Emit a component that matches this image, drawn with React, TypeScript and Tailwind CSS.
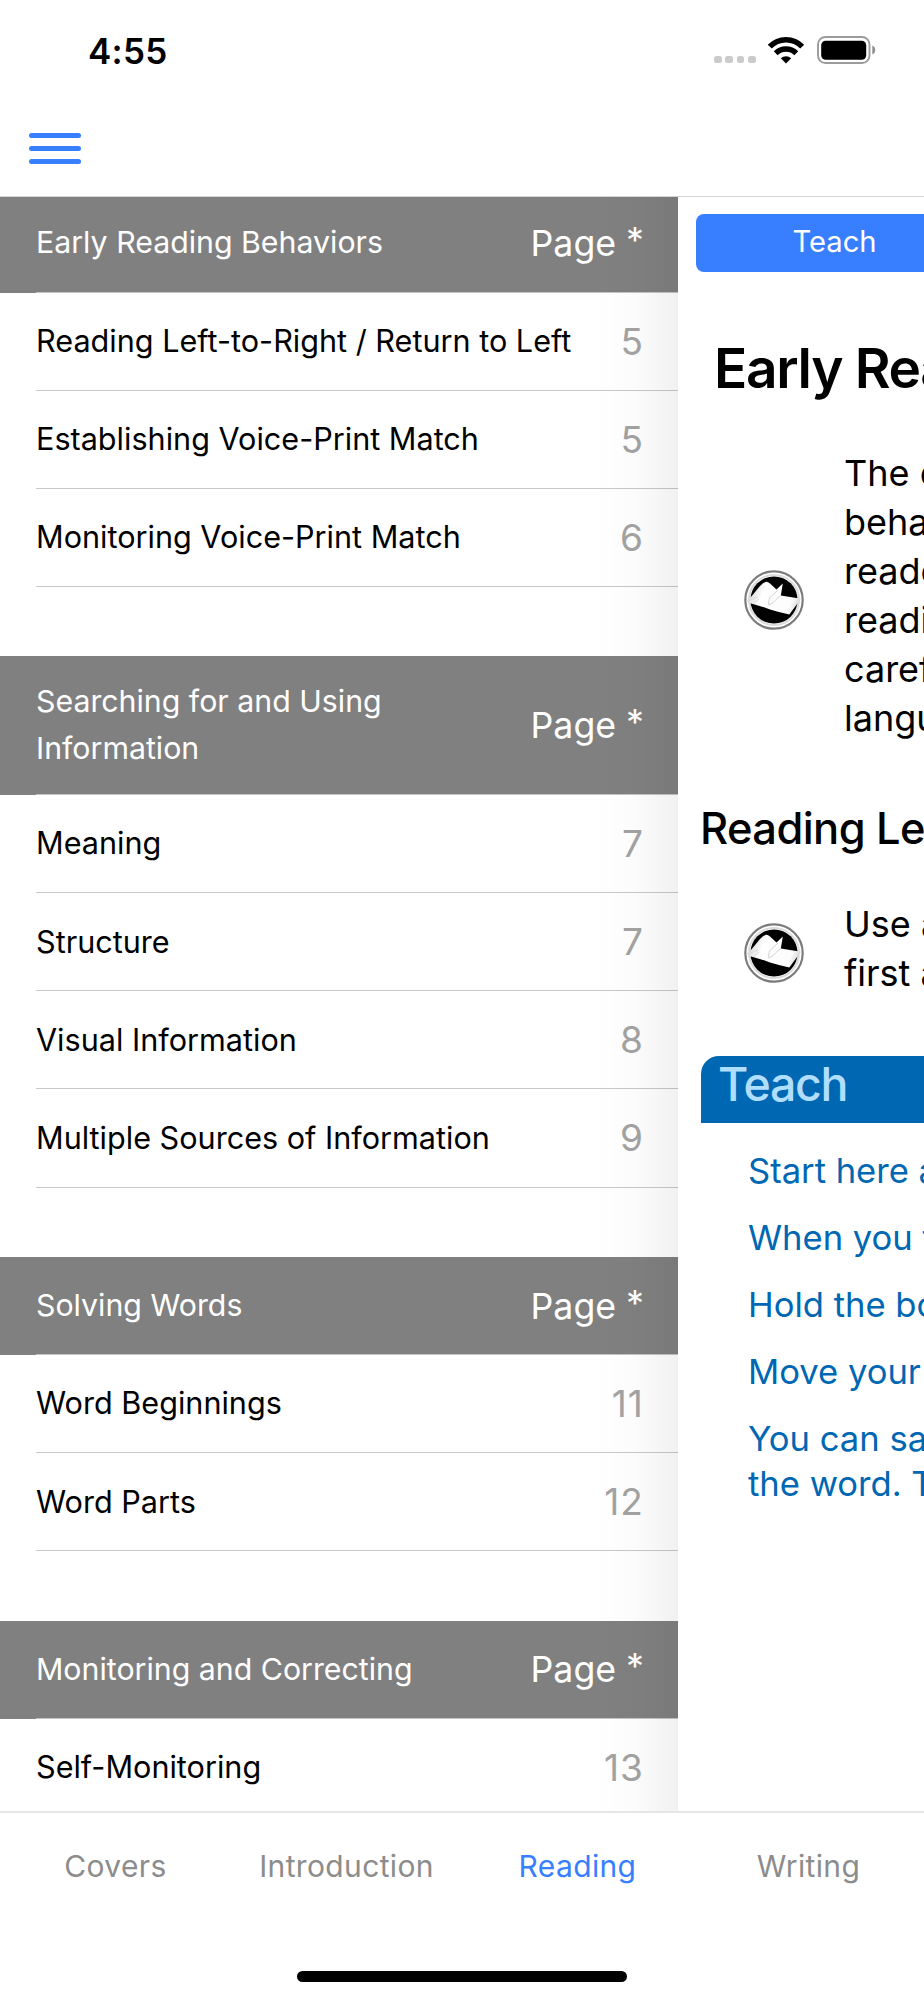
interface Topic {
  title: string;
  page: number;
}

interface Section {
  title: string;
  topics: Topic[];
}

const SECTIONS: Section[] = [
  {
    title: "Early Reading Behaviors",
    topics: [
      { title: "Reading Left-to-Right / Return to Left", page: 5 },
      { title: "Establishing Voice-Print Match", page: 5 },
      { title: "Monitoring Voice-Print Match", page: 6 },
    ],
  },
  {
    title: "Searching for and Using Information",
    topics: [
      { title: "Meaning", page: 7 },
      { title: "Structure", page: 7 },
      { title: "Visual Information", page: 8 },
      { title: "Multiple Sources of Information", page: 9 },
    ],
  },
  {
    title: "Solving Words",
    topics: [
      { title: "Word Beginnings", page: 11 },
      { title: "Word Parts", page: 12 },
    ],
  },
  {
    title: "Monitoring and Correcting",
    topics: [{ title: "Self-Monitoring", page: 13 }],
  },
];

const TABS = ["Covers", "Introduction", "Reading", "Writing"];
const ACTIVE_TAB = "Reading";

const INTRO_LINES = ["The e", "beha", "reade", "readi", "caref", "langu"];
const USE_LINES = ["Use a", "first a"];
const PROMPTS = [
  ["Start here a"],
  ["When you f"],
  ["Hold the bo"],
  ["Move your"],
  ["You can sav", "the word. T"],
];

export default function App() {
  return (
    <div className="w-[924px] h-[2000px] overflow-hidden bg-white text-black font-['Inter',sans-serif] flex flex-col">
      <StatusBar />
      <header className="h-[97px] shrink-0 border-b border-[#d4d4d4] pl-[29px] pt-[33px]">
        <button aria-label="Menu" className="flex flex-col gap-2">
          <span className="block w-[52px] h-[5px] rounded-full bg-[#387fff]" />
          <span className="block w-[52px] h-[5px] rounded-full bg-[#387fff]" />
          <span className="block w-[52px] h-[5px] rounded-full bg-[#387fff]" />
        </button>
      </header>
      <main className="h-[1614px] shrink-0 flex overflow-hidden">
        <Sidebar />
        <Content />
      </main>
      <TabBar />
    </div>
  );
}

function StatusBar() {
  return (
    <div className="h-[100px] shrink-0 flex items-start justify-between pl-[88px] pr-[48px]">
      <p className="mt-[29px] text-[35px] leading-[44px] font-semibold tracking-[0.008em]">4:55</p>
      <div className="mt-9 h-7 flex items-center">
        <div className="flex gap-[3.5px] mt-[19px]">
          {[0, 1, 2, 3].map((i) => (
            <span key={i} className="block w-[7.7px] h-[7.5px] rounded-[2.5px] bg-[#cbcbcb]" />
          ))}
        </div>
        <svg className="ml-[12.5px]" width="37" height="27" viewBox="0 0 37 27" fill="none" stroke="#000">
          <path d="M1.8 9.7 A 22.5 22.5 0 0 1 34.2 9.7" strokeWidth="5.5" />
          <path d="M7.7 16.2 A 14.7 14.7 0 0 1 28.3 16.2" strokeWidth="5.4" />
          <path d="M18 26.5 L12.8 21.2 A 7.8 7.8 0 0 1 23.2 21.2 Z" fill="#000" stroke="none" />
        </svg>
        <svg className="ml-3" width="59" height="28" viewBox="0 0 59 28">
          <rect x="1" y="1" width="51.5" height="26" rx="7.5" fill="none" stroke="#9b9b9b" strokeWidth="1.9" />
          <rect x="4.2" y="4.8" width="45" height="19" rx="4.5" fill="#000" />
          <path d="M55.3 9.5 C59.2 11 59.2 17 55.3 18.5 Z" fill="#8e8e8e" />
        </svg>
      </div>
    </div>
  );
}

function Sidebar() {
  return (
    <aside className="relative w-[678px] shrink-0 overflow-hidden">
      <div className="-mt-[2.6px] flex flex-col gap-[69.6px]">
        {SECTIONS.map((section) => (
          <section key={section.title}>
            <div className="bg-[#808080] text-white pl-9">
              <div className="min-h-[98.1px] border-b border-[#c4c4c6] pr-[34px] pt-6 pb-[22.6px] flex items-center justify-between">
                <h2 className="w-[400px] -mt-[2px] text-[30.3px] leading-[46.6px]">{section.title}</h2>
                <span className="text-[35.7px] leading-none whitespace-nowrap">
                  Page <span className="align-[3px] leading-[0]">*</span>
                </span>
              </div>
            </div>
            {section.topics.map((topic) => (
              <div key={topic.title} className="pl-9">
                <div className="h-[98.1px] border-b border-[#c8c7cc] pr-[34px] flex items-center justify-between">
                  <span className="text-[30.6px] leading-none whitespace-nowrap">{topic.title}</span>
                  <span className="text-[37px] leading-none tracking-[0.03em] text-[#a3a3a3]">{topic.page}</span>
                </div>
              </div>
            ))}
          </section>
        ))}
      </div>
      {/* shadow cast by the content pane */}
      <div className="absolute inset-y-0 right-0 w-[84px] bg-linear-to-r from-transparent via-black/[0.014] to-black/[0.056] pointer-events-none" />
    </aside>
  );
}

function Content() {
  return (
    <article className="flex-1 min-w-0 overflow-hidden whitespace-nowrap">
      <div className="ml-[18px] mt-[17px] w-[277px] h-[58px] rounded-lg bg-[#387fff] text-white pb-[2px] flex items-center justify-center">
        <span className="text-[29.2px] leading-none">Teach</span>
      </div>
      <h1 className="ml-9 mt-[61px] text-[55px] leading-[70px] font-[570] tracking-[-0.024em]">
        Early Rea
      </h1>
      <BookNote lines={INTRO_LINES} className="mt-[46px]" />
      <h2 className="ml-[22px] mt-[56.5px] text-[43.5px] leading-[56px] font-[540] tracking-[-0.014em]">
        Reading Lef
      </h2>
      <BookNote lines={USE_LINES} className="mt-[44px]" />
      <div className="ml-[23px] mt-[57.5px] h-[67px] rounded-tl-[18px] bg-[#0067b3] pl-[17px] flex">
        <h3 className="-mt-px text-[46.5px] leading-[58px] font-medium tracking-[-0.028em] text-[#b0deff]">Teach</h3>
      </div>
      <ul className="mt-[25px] ml-[70px] flex flex-col gap-[22.6px] text-[34.6px] leading-[44.5px] text-[#0067b3]">
        {PROMPTS.map((lines) => (
          <li key={lines[0]}>
            {lines.map((line) => (
              <p key={line}>{line}</p>
            ))}
          </li>
        ))}
      </ul>
    </article>
  );
}

function BookNote({ lines, className }: { lines: string[]; className: string }) {
  return (
    <div className={`flex items-center pl-[66px] ${className}`}>
      <BookIcon />
      <div className="ml-[40px] text-[36px] leading-[49.1px]">
        {lines.map((line) => (
          <p key={line}>{line}</p>
        ))}
      </div>
    </div>
  );
}

// Open book over a dark disc, inside a double ring
function BookIcon() {
  return (
    <svg className="shrink-0 mt-2 blur-[0.6px]" width="60" height="60" viewBox="0 0 60 60">
      <defs>
        <linearGradient id="page" x1="0" y1="0.3" x2="1" y2="0.5">
          <stop offset="0" stopColor="#d0d0d0" />
          <stop offset="0.3" stopColor="#ffffff" />
          <stop offset="0.85" stopColor="#fcfcfc" />
          <stop offset="1" stopColor="#d8d8d8" />
        </linearGradient>
      </defs>
      <circle cx="30" cy="30" r="28.7" fill="#fff" stroke="#7c7c7c" strokeWidth="2.2" />
      <circle cx="30" cy="30" r="25" fill="none" stroke="#dcdcdc" strokeWidth="2" />
      <circle cx="30" cy="30" r="23.6" fill="#000" />
      <path
        d="M2.5 30.5 L6.5 27.5 L16 16 Q19 12.5 22 11.8 Q24 11.6 26 13.5 L32.5 19.5 L38.8 13.5 L36.8 25.5 L57 28.8 L45.3 44.5 Q36 42.5 26 39.5 Q15 35.5 7 33.5 Z"
        fill="url(#page)"
      />
      <path
        d="M24.8 35 Q24 28.5 27.5 26 L34 20 M24.8 35 Q30 33 32 29.5 L36.8 25.5"
        fill="none"
        stroke="#d2d2d2"
        strokeWidth="1"
      />
      <path d="M5 30.5 L14 27 M10 33 L15 29" stroke="#dadada" strokeWidth="1" />
    </svg>
  );
}

function TabBar() {
  return (
    <footer className="flex-1 border-t-2 border-[#e6e6e6] flex flex-col items-center justify-between pb-[18px]">
      <nav className="w-full grid grid-cols-4 pt-[35px]">
        {TABS.map((tab) => (
          <span
            key={tab}
            className={`text-center text-[30px] leading-9 tracking-[0.012em] ${
              tab === ACTIVE_TAB ? "text-[#387fff]" : "text-[#8c8c8c]"
            }`}
          >
            {tab}
          </span>
        ))}
      </nav>
      <div className="w-[330px] h-[11px] rounded-full bg-black" />
    </footer>
  );
}
